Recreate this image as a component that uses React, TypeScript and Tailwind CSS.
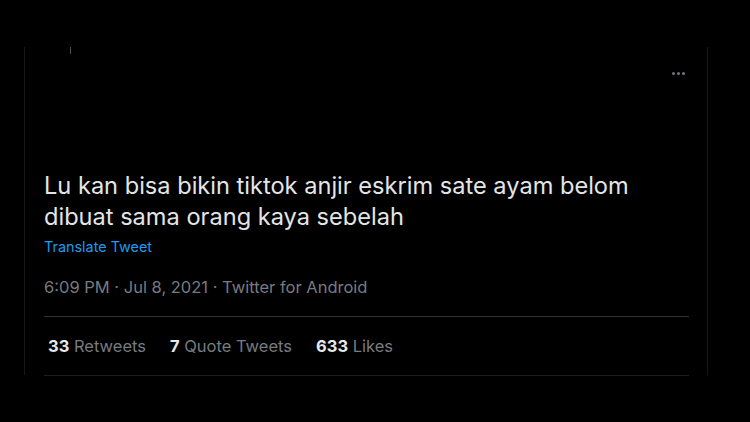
export default function App() {
  return (
    <div className="w-[750px] h-[422px] bg-black overflow-hidden" style={{ fontFamily: 'Inter, "Liberation Sans", sans-serif' }}>
      <div className="pt-[47px] pl-[24px]">
        <div className="relative w-[684px] h-[328px] border-l border-r border-[#16181a]">
          {/* thread line remnant */}
          <div className="absolute left-[45px] top-0 w-[1px] h-[7px] bg-[#4a4d50]" />
          {/* more menu */}
          <div className="absolute right-[22px] top-[25px] flex gap-[2px]">
            <span className="w-[3px] h-[3px] rounded-full bg-[#71767b]" />
            <span className="w-[3px] h-[3px] rounded-full bg-[#71767b]" />
            <span className="w-[3px] h-[3px] rounded-full bg-[#71767b]" />
          </div>
          <div className="pl-[19px] pr-[18px] pt-[123px]">
            <p className="text-[23.6px] leading-[31px] text-[#e3e5e6]">
              Lu kan bisa bikin tiktok anjir eskrim sate ayam belom
              <br />
              dibuat sama orang kaya sebelah
            </p>
            <div className="mt-[5px] text-[14.4px] leading-[20px] text-[#1d9bf0]">Translate Tweet</div>
            <div className="mt-[19px] text-[16.5px] leading-[22px] text-[#777b80]">
              6:09 PM · Jul 8, 2021 · Twitter for Android
            </div>
            <div className="mt-[18px] border-t border-[#2f3336] h-[60px] flex items-center gap-[24px] pl-[4px] text-[16.5px] border-b border-b-[#1c1e20]">
              <span>
                <span className="font-bold text-[#e7e9ea]">33</span>
                <span className="text-[#777b80]"> Retweets</span>
              </span>
              <span>
                <span className="font-bold text-[#e7e9ea]">7</span>
                <span className="text-[#777b80]"> Quote Tweets</span>
              </span>
              <span>
                <span className="font-bold text-[#e7e9ea]">633</span>
                <span className="text-[#777b80]"> Likes</span>
              </span>
            </div>
          </div>
        </div>
      </div>
    </div>
  );
}
